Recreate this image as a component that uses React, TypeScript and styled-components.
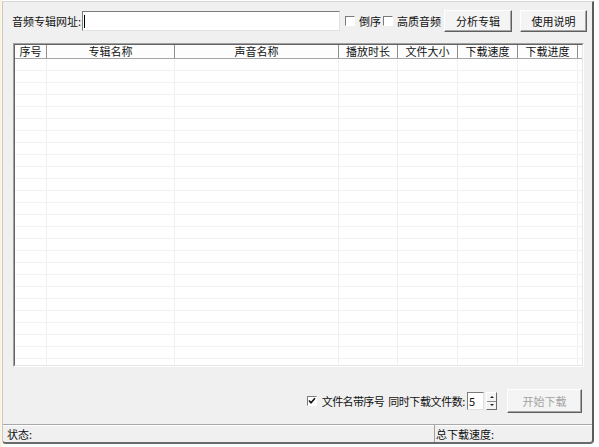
import React from "react";
import styled, { createGlobalStyle } from "styled-components";

const GlobalStyle = createGlobalStyle`
  html, body { margin: 0; padding: 0; background: #ffffff; }
  body {
    font-family: "Noto Sans CJK SC", "Noto Sans", sans-serif;
    font-size: 11px;
    color: #111;
  }
  * { box-sizing: border-box; }
`;

const Desktop = styled.div`
  width: 599px;
  height: 447px;
  padding: 1px 0 0 2px;
  background: linear-gradient(90deg, #fbf1d6 0, #fffdf6 3px, #ffffff 8px);
  overflow: hidden;
`;

const Window = styled.div`
  width: 592px;
  height: 443px;
  background: #f0f0f0;
  border-left: 1px solid #c8c8c8;
  border-top: 1px solid #d6d6d6;
  border-right: 2px solid #5c5c5c;
  border-bottom: 2px solid #6a6a6a;
  border-radius: 0 0 4px 4px;
  display: flex;
  flex-direction: column;
`;

const TopBar = styled.div`
  display: flex;
  align-items: center;
  height: 22px;
  margin-top: 8px;
  padding-left: 9px;
`;

const Label = styled.span<{ $w?: number; $ml?: number; $ls?: number }>`
  flex: none;
  white-space: nowrap;
  line-height: 14px;
  ${(p) => (p.$w ? `width: ${p.$w}px;` : "")}
  ${(p) => (p.$ml ? `margin-left: ${p.$ml}px;` : "")}
  ${(p) => (p.$ls ? `letter-spacing: ${p.$ls}px;` : "")}
`;

const TextBox = styled.div<{ $w: number; $h: number; $ml?: number }>`
  flex: none;
  width: ${(p) => p.$w}px;
  height: ${(p) => p.$h}px;
  margin-left: ${(p) => p.$ml ?? 0}px;
  background: #fff;
  border: 1px solid;
  border-color: #7c7c7c #e2e2e2 #e2e2e2 #7c7c7c;
  display: flex;
  align-items: center;
  padding-left: 1px;
  line-height: 14px;
`;

const Caret = styled.span`
  display: block;
  width: 1px;
  height: 13px;
  background: #000;
`;

const CheckGroup = styled.label<{ $ml: number }>`
  display: flex;
  align-items: center;
  margin-left: ${(p) => p.$ml}px;
  flex: none;
`;

const CheckBox = styled.span`
  flex: none;
  width: 10px;
  height: 10px;
  background: #fff;
  border: 1px solid;
  border-color: #7a7a7a #ffffff #ffffff #7a7a7a;
  display: flex;
  align-items: center;
  justify-content: center;
  margin-right: 4px;
`;

const Button = styled.button<{ $w: number; $h: number; $ml: number }>`
  flex: none;
  width: ${(p) => p.$w}px;
  height: ${(p) => p.$h}px;
  margin-left: ${(p) => p.$ml}px;
  padding: 0;
  font: inherit;
  color: #111;
  background: #f4f4f4;
  border: 1px solid;
  border-color: #ffffff #5f5f5f #5f5f5f #ffffff;
  box-shadow: inset -1px -1px 0 #a6a6a6;
  line-height: 14px;
  &:disabled {
    color: #a3a3a3;
  }
`;

const TableFrame = styled.div`
  width: 571px;
  height: 324px;
  margin: 11px 0 0 10px;
  border: 1px solid;
  border-color: #a0a0a0 #ffffff #ffffff #a0a0a0;
  flex: none;
`;

const TableInner = styled.div`
  width: 100%;
  height: 100%;
  background: #fff;
  border: 1px solid;
  border-color: #646464 #e6e6e6 #e6e6e6 #646464;
  overflow: hidden;
  display: flex;
  flex-direction: column;
`;

const HeaderRow = styled.div`
  display: flex;
  height: 14px;
  flex: none;
  border-bottom: 1px solid #a5a5a5;
  background: #fdfdfd;
`;

const HeaderCell = styled.div<{ $w: number }>`
  flex: none;
  width: ${(p) => p.$w}px;
  height: 13px;
  line-height: 13px;
  text-align: center;
  border-right: 1px solid #8e8e8e;
  box-shadow: inset 1px 0 0 #ffffff;
  white-space: nowrap;
`;

const Filler = styled.div`
  flex: 1;
`;

const BodyRow = styled.div`
  display: flex;
  height: 12px;
  flex: none;
  border-bottom: 1px solid #f2f2f2;
`;

const BodyCell = styled.div<{ $w: number }>`
  flex: none;
  width: ${(p) => p.$w}px;
  height: 11px;
  border-right: 1px solid #f0f0f0;
`;

const BottomBar = styled.div`
  display: flex;
  align-items: center;
  justify-content: flex-end;
  height: 24px;
  margin-top: 22px;
  padding-right: 10px;
`;

const Spin = styled.div`
  flex: none;
  width: 11px;
  height: 18px;
  margin-left: 2px;
  display: flex;
  flex-direction: column;
  border: 1px solid;
  border-color: #ffffff #6a6a6a #6a6a6a #ffffff;
  background: #f4f4f4;
`;

const SpinHalf = styled.div<{ $down?: boolean }>`
  flex: 1;
  display: flex;
  align-items: center;
  justify-content: center;
  ${(p) => (p.$down ? "" : "border-bottom: 1px solid #8a8a8a;")}
`;

const Arrow = styled.span<{ $down?: boolean }>`
  width: 0;
  height: 0;
  border-left: 2px solid transparent;
  border-right: 2px solid transparent;
  ${(p) =>
    p.$down ? "border-top: 2px solid #222;" : "border-bottom: 2px solid #222;"}
`;

const StatusBar = styled.div`
  margin-top: auto;
  height: 18px;
  flex: none;
  display: flex;
  border-top: 1px solid #a8a8a8;
  box-shadow: inset 0 1px 0 #ffffff;
`;

const StatusPane = styled.div<{ $w?: number; $pl: number }>`
  ${(p) => (p.$w ? `width: ${p.$w}px; flex: none; border-right: 1px solid #a0a0a0;` : "flex: 1;")}
  padding-left: ${(p) => p.$pl}px;
  padding-top: 1px;
  display: flex;
  align-items: center;
  line-height: 14px;
  white-space: nowrap;
`;

const columns = [
  { label: "序号", w: 32 },
  { label: "专辑名称", w: 128 },
  { label: "声音名称", w: 164 },
  { label: "播放时长", w: 59 },
  { label: "文件大小", w: 60 },
  { label: "下载速度", w: 60 },
  { label: "下载进度", w: 60 },
];

const rows = Array.from({ length: 26 }, (_, i) => i);

export default function App() {
  return (
    <>
      <GlobalStyle />
      <Desktop>
        <Window>
          <TopBar>
            <Label $w={70}>音频专辑网址:</Label>
            <TextBox $w={258} $h={20}>
              <Caret />
            </TextBox>
            <CheckGroup $ml={5}>
              <CheckBox />
              <Label>倒序</Label>
            </CheckGroup>
            <CheckGroup $ml={2}>
              <CheckBox />
              <Label>高质音频</Label>
            </CheckGroup>
            <Button $w={68} $h={22} $ml={3}>
              分析专辑
            </Button>
            <Button $w={67} $h={22} $ml={8}>
              使用说明
            </Button>
          </TopBar>

          <TableFrame>
            <TableInner>
              <HeaderRow>
                {columns.map((c) => (
                  <HeaderCell key={c.label} $w={c.w}>
                    {c.label}
                  </HeaderCell>
                ))}
                <Filler />
              </HeaderRow>
              {rows.map((r) => (
                <BodyRow key={r}>
                  {columns.map((c) => (
                    <BodyCell key={c.label} $w={c.w} />
                  ))}
                </BodyRow>
              ))}
            </TableInner>
          </TableFrame>

          <BottomBar>
            <CheckGroup $ml={0}>
              <CheckBox>
                <svg width="8" height="8" viewBox="0 0 8 8">
                  <polyline
                    points="1,3.5 3,5.8 7,1.2"
                    fill="none"
                    stroke="#111"
                    strokeWidth="1.6"
                  />
                </svg>
              </CheckBox>
              <Label $ml={1} $ls={-0.6}>
                文件名带序号
              </Label>
            </CheckGroup>
            <Label $ml={4} $ls={-0.4}>
              同时下载文件数:
            </Label>
            <TextBox $w={17} $h={18} $ml={2}>
              5
            </TextBox>
            <Spin>
              <SpinHalf>
                <Arrow />
              </SpinHalf>
              <SpinHalf $down>
                <Arrow $down />
              </SpinHalf>
            </Spin>
            <Button $w={75} $h={24} $ml={10} disabled>
              开始下载
            </Button>
          </BottomBar>

          <StatusBar>
            <StatusPane $w={432} $pl={4}>
              状态:
            </StatusPane>
            <StatusPane $pl={1}>总下载速度:</StatusPane>
          </StatusBar>
        </Window>
      </Desktop>
    </>
  );
}
